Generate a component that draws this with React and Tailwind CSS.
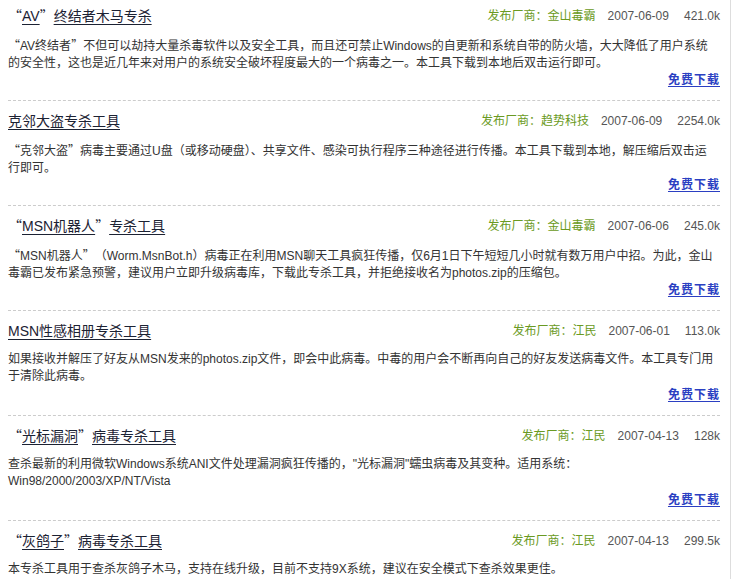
import React from "react";

const tools = [
  {
    title: "“AV”终结者木马专杀",
    vendor: "金山毒霸",
    date: "2007-06-09",
    size: "421.0k",
    desc: [
      "“AV终结者”不但可以劫持大量杀毒软件以及安全工具，而且还可禁止Windows的自更新和系统自带的防火墙，大大降低了用户系统",
      "的安全性，这也是近几年来对用户的系统安全破坏程度最大的一个病毒之一。本工具下载到本地后双击运行即可。",
    ],
  },
  {
    title: "克邻大盗专杀工具",
    vendor: "趋势科技",
    date: "2007-06-09",
    size: "2254.0k",
    desc: [
      "“克邻大盗”病毒主要通过U盘（或移动硬盘）、共享文件、感染可执行程序三种途径进行传播。本工具下载到本地，解压缩后双击运",
      "行即可。",
    ],
  },
  {
    title: "“MSN机器人”专杀工具",
    vendor: "金山毒霸",
    date: "2007-06-06",
    size: "245.0k",
    desc: [
      "“MSN机器人”（Worm.MsnBot.h）病毒正在利用MSN聊天工具疯狂传播，仅6月1日下午短短几小时就有数万用户中招。为此，金山",
      "毒霸已发布紧急预警，建议用户立即升级病毒库，下载此专杀工具，并拒绝接收名为photos.zip的压缩包。",
    ],
  },
  {
    title: "MSN性感相册专杀工具",
    vendor: "江民",
    date: "2007-06-01",
    size: "113.0k",
    desc: [
      "如果接收并解压了好友从MSN发来的photos.zip文件，即会中此病毒。中毒的用户会不断再向自己的好友发送病毒文件。本工具专门用",
      "于清除此病毒。",
    ],
  },
  {
    title: "“光标漏洞”病毒专杀工具",
    vendor: "江民",
    date: "2007-04-13",
    size: "128k",
    desc: [
      "查杀最新的利用微软Windows系统ANI文件处理漏洞疯狂传播的，\"光标漏洞\"蠕虫病毒及其变种。适用系统：",
      "Win98/2000/2003/XP/NT/Vista",
    ],
  },
  {
    title: "“灰鸽子”病毒专杀工具",
    vendor: "江民",
    date: "2007-04-13",
    size: "299.5k",
    desc: ["本专杀工具用于查杀灰鸽子木马，支持在线升级，目前不支持9X系统，建议在安全模式下查杀效果更佳。"],
  },
];

const font = "font-['Liberation_Sans','Noto_Sans_CJK_SC',sans-serif]";

// full-width curly quotes, like the old Chinese pages render them
function Quoted({ text }) {
  const parts = text.split(/([“”])/);
  return parts.map((p, i) =>
    p === "“" || p === "”" ? (
      <span
        key={i}
        className="inline-block w-[1em] font-['Noto_Sans_CJK_SC',sans-serif]"
        style={{ textAlign: p === "“" ? "right" : "left" }}
      >
        {p}
      </span>
    ) : (
      <React.Fragment key={i}>{p}</React.Fragment>
    )
  );
}

function ToolItem({ t }) {
  return (
    <div className="border-b border-dashed border-[#cccccc] pt-[10px] pb-[11px] first:pt-[6px]">
      <div className="flex items-end justify-between h-[20px]">
        <a
          href="#"
          className="text-[14px] leading-[20px] text-[#1c2233] underline decoration-[#1c2233] underline-offset-[3px]"
        >
          <Quoted text={t.title} />
        </a>
        <div className="flex items-center text-[12px] leading-[20px] whitespace-nowrap">
          <span className="text-[#6a9a22]">发布厂商：{t.vendor}</span>
          <span className="ml-[12px] text-[#555555]">{t.date}</span>
          <span className="ml-[15px] text-[#555555]">{t.size}</span>
        </div>
      </div>
      <p className="mt-[10px] text-[12px] leading-[17px] text-[#333333] h-[34px]">
        {t.desc.map((line, i) => (
          <span key={i} className="block whitespace-nowrap">
            <Quoted text={line} />
          </span>
        ))}
      </p>
      <div className="mt-[1px] flex justify-end">
        <a
          href="#"
          className="text-[12px] leading-[18px] font-bold text-[#2b3fc2] underline underline-offset-2 tracking-[1px]"
        >
          免费下载
        </a>
      </div>
    </div>
  );
}

export default function App() {
  return (
    <div className={`bg-white w-[735px] h-[579px] overflow-hidden ${font}`}>
      <div className="w-[731px] h-full border-r border-[#dddddd] pl-[8px] pr-[10px]">
        {tools.map((t, i) => (
          <ToolItem key={i} t={t} />
        ))}
      </div>
    </div>
  );
}
